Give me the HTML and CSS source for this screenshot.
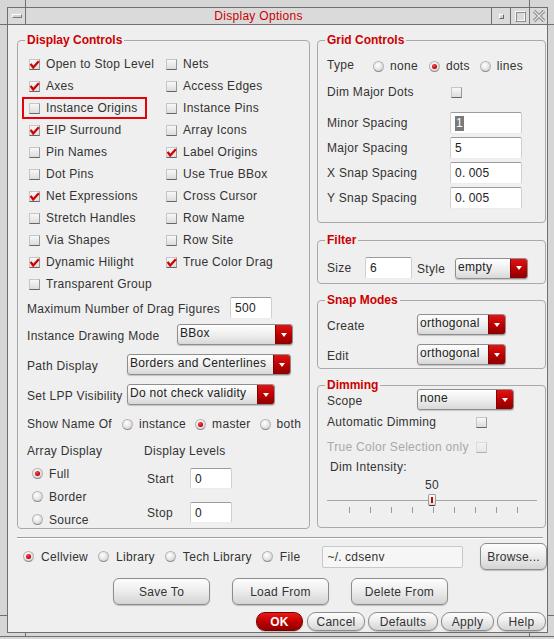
FILE: index.html
```html
<!DOCTYPE html>
<html lang="en">
<head>
<meta charset="utf-8">
<title>Display Options</title>
<link rel="stylesheet" href="styles.css">
</head>
<body>
<div class="window">
  <div class="frame-strip">
    <div class="fs-left"></div>
    <div class="fs-mid"></div>
    <div class="fs-right"></div>
  </div>
  <div class="title-row">
    <div class="edge edge-l"></div>
    <div class="titlebar">
      <div class="tb-cell tb-menu"><span class="menu-bar"></span></div>
      <div class="tb-title">Display Options</div>
      <div class="tb-cell tb-w19"><span class="min-box"></span></div>
      <div class="tb-cell tb-w19"><span class="max-box"></span></div>
      <div class="tb-cell tb-w18">
        <svg class="close-x" width="14" height="14" viewBox="0 0 14 14">
          <path d="M2 2 L12 12 M12 2 L2 12" stroke="#8a8a8a" stroke-width="3.2" fill="none"/>
          <path d="M2 2 L12 12 M12 2 L2 12" stroke="#e4e4e4" stroke-width="1.2" fill="none"/>
        </svg>
      </div>
    </div>
    <div class="edge edge-r"></div>
  </div>

  <div class="mid">
    <div class="side side-l"><div class="side-top"></div></div>
    <main class="content">
      <div class="panels">
        <fieldset class="group dc">
          <legend>Display Controls</legend>
          <div class="cbgrid">
            <label class="cbitem"><span class="cb"><svg class="ck" viewBox="0 0 11 11"><path d="M1.6 4.8 L4.2 8.4 L9.8 2.2"/></svg></span>Open to Stop Level</label>
            <label class="cbitem"><span class="cb"></span>Nets</label>
            <label class="cbitem"><span class="cb"><svg class="ck" viewBox="0 0 11 11"><path d="M1.6 4.8 L4.2 8.4 L9.8 2.2"/></svg></span>Axes</label>
            <label class="cbitem"><span class="cb"></span>Access Edges</label>
            <label class="cbitem hl"><span class="cb"></span>Instance Origins</label>
            <label class="cbitem"><span class="cb"></span>Instance Pins</label>
            <label class="cbitem"><span class="cb"><svg class="ck" viewBox="0 0 11 11"><path d="M1.6 4.8 L4.2 8.4 L9.8 2.2"/></svg></span>EIP Surround</label>
            <label class="cbitem"><span class="cb"></span>Array Icons</label>
            <label class="cbitem"><span class="cb"></span>Pin Names</label>
            <label class="cbitem"><span class="cb"><svg class="ck" viewBox="0 0 11 11"><path d="M1.6 4.8 L4.2 8.4 L9.8 2.2"/></svg></span>Label Origins</label>
            <label class="cbitem"><span class="cb"></span>Dot Pins</label>
            <label class="cbitem"><span class="cb"></span>Use True BBox</label>
            <label class="cbitem"><span class="cb"><svg class="ck" viewBox="0 0 11 11"><path d="M1.6 4.8 L4.2 8.4 L9.8 2.2"/></svg></span>Net Expressions</label>
            <label class="cbitem"><span class="cb"></span>Cross Cursor</label>
            <label class="cbitem"><span class="cb"></span>Stretch Handles</label>
            <label class="cbitem"><span class="cb"></span>Row Name</label>
            <label class="cbitem"><span class="cb"></span>Via Shapes</label>
            <label class="cbitem"><span class="cb"></span>Row Site</label>
            <label class="cbitem"><span class="cb"><svg class="ck" viewBox="0 0 11 11"><path d="M1.6 4.8 L4.2 8.4 L9.8 2.2"/></svg></span>Dynamic Hilight</label>
            <label class="cbitem"><span class="cb"><svg class="ck" viewBox="0 0 11 11"><path d="M1.6 4.8 L4.2 8.4 L9.8 2.2"/></svg></span>True Color Drag</label>
            <label class="cbitem"><span class="cb"></span>Transparent Group</label>
          </div>

          <div class="frow drag-row">
            <span class="lbl">Maximum Number of Drag Figures</span>
            <span class="inp">500</span>
          </div>
          <div class="frow mode-row">
            <span class="lbl">Instance Drawing Mode</span>
            <span class="dd"><span class="dd-text">BBox</span><span class="dd-btn"></span></span>
          </div>
          <div class="frow path-row">
            <span class="lbl">Path Display</span>
            <span class="dd"><span class="dd-text">Borders and Centerlines</span><span class="dd-btn"></span></span>
          </div>
          <div class="frow lpp-row">
            <span class="lbl">Set LPP Visibility</span>
            <span class="dd"><span class="dd-text">Do not check validity</span><span class="dd-btn"></span></span>
          </div>
          <div class="show-row">
            <span class="show-label">Show Name Of</span>
            <span class="opt"><span class="rd"></span>instance</span>
            <span class="opt"><span class="rd on"></span>master</span>
            <span class="opt last"><span class="rd"></span>both</span>
          </div>
          <div class="array">
            <div class="arr-col">
              <div class="cap">Array Display</div>
              <div class="rrow first"><span class="rd on"></span>Full</div>
              <div class="rrow"><span class="rd"></span>Border</div>
              <div class="rrow"><span class="rd"></span>Source</div>
            </div>
            <div class="lvl-col">
              <div class="cap">Display Levels</div>
              <div class="lvl-row start"><span>Start</span><span class="inp">0</span></div>
              <div class="lvl-row stop"><span>Stop</span><span class="inp">0</span></div>
            </div>
          </div>
        </fieldset>

        <div class="rightcol">
          <fieldset class="group grid-g">
            <legend>Grid Controls</legend>
            <div class="type-row">
              <span class="type-label">Type</span>
              <span class="opt o1"><span class="rd"></span>none</span>
              <span class="opt o2"><span class="rd on"></span>dots</span>
              <span class="opt"><span class="rd"></span>lines</span>
            </div>
            <div class="dim-row">
              <span>Dim Major Dots</span>
              <span class="cb"></span>
            </div>
            <div class="spacing">
              <span>Minor Spacing</span><span class="inp wide"><span class="sel">1</span></span>
              <span>Major Spacing</span><span class="inp wide">5</span>
              <span>X Snap Spacing</span><span class="inp wide">0<span class="dot">.</span>005</span>
              <span>Y Snap Spacing</span><span class="inp wide">0<span class="dot">.</span>005</span>
            </div>
          </fieldset>

          <fieldset class="group filter-g">
            <legend>Filter</legend>
            <div class="filter-row">
              <span class="lab-size">Size</span>
              <span class="inp size-inp">6</span>
              <span class="lab-style">Style</span>
              <span class="dd style-dd"><span class="dd-text">empty</span><span class="dd-btn"></span></span>
            </div>
          </fieldset>

          <fieldset class="group snap-g">
            <legend>Snap Modes</legend>
            <div class="frow snap-row first">
              <span class="lbl">Create</span>
              <span class="dd"><span class="dd-text">orthogonal</span><span class="dd-btn"></span></span>
            </div>
            <div class="frow snap-row second">
              <span class="lbl">Edit</span>
              <span class="dd"><span class="dd-text">orthogonal</span><span class="dd-btn"></span></span>
            </div>
          </fieldset>

          <fieldset class="group dim-g">
            <legend>Dimming</legend>
            <div class="frow scope-row">
              <span class="lbl">Scope</span>
              <span class="dd"><span class="dd-text">none</span><span class="dd-btn"></span></span>
            </div>
            <div class="frow chk-row auto-row">
              <span>Automatic Dimming</span>
              <span class="cb"></span>
            </div>
            <div class="frow chk-row tc-row">
              <span>True Color Selection only</span>
              <span class="cb dis"></span>
            </div>
            <div class="di-label">Dim Intensity:</div>
            <div class="slider-val">50</div>
            <div class="slider"><span class="knob"></span></div>
            <div class="ticks">
              <span></span><span></span><span></span><span></span><span></span><span></span><span></span><span></span><span></span>
            </div>
          </fieldset>
        </div>
      </div>

      <div class="sep"></div>

      <div class="file-row">
        <span class="opt"><span class="rd on"></span>Cellview</span>
        <span class="opt"><span class="rd"></span>Library</span>
        <span class="opt"><span class="rd"></span>Tech Library</span>
        <span class="opt"><span class="rd"></span>File</span>
        <span class="path-field">~/<span class="dot">.</span>cdsenv</span>
        <span class="btn browse">Browse...</span>
      </div>

      <div class="btn-row">
        <span class="btn big">Save To</span>
        <span class="btn big">Load From</span>
        <span class="btn big">Delete From</span>
      </div>

      <div class="ok-row">
        <span class="btn pill ok">OK</span>
        <span class="btn pill w-cancel">Cancel</span>
        <span class="btn pill w-defaults">Defaults</span>
        <span class="btn pill w-apply">Apply</span>
        <span class="btn pill w-help">Help</span>
      </div>
    </main>
    <div class="side side-r"><div class="side-top"></div></div>
  </div>

  <div class="frame-strip bottom">
    <div class="fs-left"></div>
    <div class="fs-mid"></div>
    <div class="fs-right"></div>
  </div>
</div>
</body>
</html>
```

FILE: styles.css
```css
* { box-sizing: border-box; }

html, body { margin: 0; padding: 0; }

body {
  width: 554px;
  height: 639px;
  overflow: hidden;
  background: #d6d6d6;
  font-family: "Liberation Sans", Arial, sans-serif;
  font-size: 12px;
  color: #333;
  letter-spacing: 0.3px;
}

.window {
  width: 554px;
  height: 639px;
  display: flex;
  flex-direction: column;
}

/* ---------- window frame ---------- */
.frame-strip { height: 7px; display: flex; }
.frame-strip.bottom { height: 4px; border-bottom: 1px solid #707070; }
.fs-left { width: 26px; border-right: 1px solid #707070; }
.fs-mid { flex: 1; }
.fs-right { width: 25px; border-left: 1px solid #707070; }

.title-row { display: flex; height: 18px; }
.edge { border-bottom: 1px solid #707070; }
.edge-l { width: 7px; }
.edge-r { width: 6px; }

.titlebar {
  width: 541px;
  border: 1px solid #707070;
  background: #dadada;
  display: flex;
}
.tb-cell {
  display: flex;
  align-items: center;
  justify-content: center;
}
.tb-menu { width: 18px; border-right: 1px solid #707070; }
.tb-w19 { width: 19px; border-left: 1px solid #707070; }
.tb-w18 { width: 18px; border-left: 1px solid #707070; }
.menu-bar {
  width: 10px;
  height: 4px;
  border: 1px solid #7c7c7c;
  border-top-color: #fff;
  border-left-color: #fff;
  background: #d0d0d0;
}
.min-box {
  width: 5px;
  height: 5px;
  border: 1px solid #6a6a6a;
  border-top-color: #fff;
  border-left-color: #fff;
  background: #cfcfcf;
}
.max-box {
  width: 11px;
  height: 11px;
  border: 1px solid #8a8a8a;
  border-top-color: #fafafa;
  border-left-color: #fafafa;
  box-shadow: inset 1px 1px 0 #8a8a8a, inset -1px -1px 0 #fafafa;
}
.tb-title {
  flex: 1;
  text-align: center;
  color: #cc0000;
  line-height: 16px;
}

.mid { display: flex; height: 608px; }
.side-l { width: 7px; }
.side-r { width: 6px; }
.side-top { height: 591px; border-bottom: 1px solid #707070; }

.content {
  width: 541px;
  background: #efefef;
  border-left: 1px solid #707070;
  border-right: 1px solid #707070;
  border-bottom: 1px solid #707070;
  padding: 8px 0 0 9px;
  display: flex;
  flex-direction: column;
}

/* ---------- group boxes ---------- */
.panels { display: flex; gap: 7px; height: 496px; }

fieldset.group {
  margin: 0;
  padding: 0 9px;
  border: 1px solid #a9a9a9;
  border-radius: 4px;
  min-width: 0;
}
fieldset.group legend {
  padding: 0 2px;
  margin-left: -2px;
  font-weight: bold;
  color: #cc0000;
  line-height: 14px;
  letter-spacing: 0;
}

fieldset.dc { width: 293px; height: 496px; padding-top: 6px; }
.rightcol { width: 229px; display: flex; flex-direction: column; }
fieldset.grid-g { height: 190px; }
fieldset.filter-g { height: 51px; margin-top: 10px; }
fieldset.snap-g { height: 76px; margin-top: 9px; }
fieldset.dim-g { height: 150px; margin-top: 9px; }

/* ---------- controls ---------- */
.cb {
  flex: none;
  width: 11px;
  height: 11px;
  display: inline-flex;
  background: linear-gradient(#f8f8f8, #dcdcdc);
  border: 1px solid #c6c6c6;
  border-right-color: #999;
  border-bottom-color: #666;
}
.cb.dis { opacity: 0.45; }
.ck {
  width: 11px;
  height: 11px;
  margin: -1px;
  overflow: visible;
}
.ck path {
  fill: none;
  stroke: #d20000;
  stroke-width: 2.3;
}

.rd {
  flex: none;
  width: 11px;
  height: 11px;
  border-radius: 50%;
  display: inline-flex;
  align-items: center;
  justify-content: center;
  background: radial-gradient(circle at 40% 35%, #ffffff, #e4e4e4 55%, #b9b9b9);
  border: 1px solid #b4b4b4;
  border-bottom-color: #8e8e8e;
}
.rd.on::after {
  content: "";
  width: 5px;
  height: 5px;
  border-radius: 50%;
  background: radial-gradient(circle at 40% 35%, #ff5050, #cc0000 60%, #8a0000);
}

.opt {
  flex: none;
  display: inline-flex;
  align-items: center;
  gap: 6px;
  white-space: nowrap;
}

.inp {
  display: flex;
  align-items: center;
  height: 22px;
  padding-left: 4px;
  background: #fff;
  border: 1px solid #cfcfcf;
  border-top-color: #9c9c9c;
  border-bottom-color: #ececec;
  border-radius: 2px;
  color: #222;
  white-space: nowrap;
}
.sel {
  display: inline-block;
  background: #7a7a7a;
  color: #fff;
  line-height: 15px;
  padding: 0 1px;
}
.dot { margin-right: 3px; }

.dd {
  display: flex;
  height: 21px;
  border: 1px solid #8e8e8e;
  border-radius: 3px;
  background: linear-gradient(#fefefe, #efefef 50%, #d8d8d8);
  box-shadow: 0 1px 1px rgba(0, 0, 0, 0.18);
  overflow: hidden;
}
.dd-text {
  flex: 1;
  padding-left: 2px;
  line-height: 17px;
  color: #222;
  white-space: nowrap;
  overflow: hidden;
}
.dd-btn {
  width: 17px;
  flex: none;
  display: flex;
  align-items: center;
  justify-content: center;
  background: linear-gradient(#e01414, #b80000 55%, #8e0000);
  border-left: 1px solid #8a0000;
}
.dd-btn::after {
  content: "";
  border-left: 3px solid transparent;
  border-right: 3px solid transparent;
  border-top: 4px solid #fff;
}

.btn {
  display: flex;
  align-items: center;
  justify-content: center;
  border: 1px solid #8c8c8c;
  border-radius: 6px;
  background: linear-gradient(#fdfdfd, #eeeeee 45%, #d4d4d4);
  box-shadow: 0 1px 1px rgba(0, 0, 0, 0.2);
  color: #333;
  white-space: nowrap;
}

/* ---------- display controls ---------- */
.cbgrid {
  display: grid;
  grid-template-columns: 137px 1fr;
  grid-auto-rows: 22px;
  margin-left: 2px;
}
.cbitem {
  display: flex;
  align-items: center;
  gap: 6px;
  white-space: nowrap;
}
.cbitem.hl {
  width: 125px;
  margin-left: -7px;
  padding-left: 5px;
  border: 2px solid #e8000b;
}

.frow { display: grid; align-items: center; white-space: nowrap; }
.frow .lbl { padding-top: 3px; }
.drag-row .lbl { padding-top: 1px; }
.drag-row { grid-template-columns: 203px 42px; height: 22px; margin-top: 2px; }
.mode-row { grid-template-columns: 150px 116px; height: 21px; margin-top: 5px; }
.path-row { grid-template-columns: 100px 164px; height: 21px; margin-top: 9px; }
.lpp-row { grid-template-columns: 100px 148px; height: 21px; margin-top: 9px; }

.show-row {
  display: flex;
  align-items: center;
  height: 22px;
  margin-top: 8px;
  white-space: nowrap;
}
.show-label { flex: none; width: 95px; }
.show-row .opt { margin-right: 9px; }
.show-row .opt.last { margin-right: 0; }

.array {
  display: grid;
  grid-template-columns: 117px 1fr;
  margin-top: 9px;
}
.cap { line-height: 14px; }
.rrow {
  display: flex;
  align-items: center;
  gap: 6px;
  height: 23px;
  padding-left: 5px;
}
.rrow.first { margin-top: 4px; }
.lvl-row {
  display: grid;
  grid-template-columns: 43px 42px;
  align-items: center;
  height: 21px;
  margin-left: 3px;
}
.lvl-row .inp { height: 21px; }
.lvl-row.start { margin-top: 10px; }
.lvl-row.stop { margin-top: 13px; }

/* ---------- grid controls ---------- */
.type-row {
  display: flex;
  align-items: center;
  height: 22px;
  margin-top: 8px;
}
.type-label { width: 46px; padding-bottom: 3px; }
.type-row .o1 { margin-right: 11px; }
.type-row .o2 { margin-right: 10px; }

.dim-row {
  display: grid;
  grid-template-columns: 124px 11px;
  align-items: center;
  height: 22px;
  margin-top: 4px;
}
.spacing {
  display: grid;
  grid-template-columns: 123px 72px;
  grid-auto-rows: 22px;
  row-gap: 3px;
  align-items: center;
  margin-top: 9px;
}
.inp.wide { height: 22px; }

/* ---------- filter ---------- */
.filter-row {
  display: flex;
  align-items: center;
  height: 22px;
  margin-top: 10px;
}
.lab-size { width: 38px; }
.size-inp { width: 47px; }
.lab-style { width: 38px; margin-left: 5px; padding-top: 2px; }
.style-dd { width: 73px; }

/* ---------- snap ---------- */
.snap-row { grid-template-columns: 90px 89px; height: 21px; }
.snap-row.first { margin-top: 7px; }
.snap-row.second { margin-top: 9px; }

/* ---------- dimming ---------- */
.scope-row { grid-template-columns: 90px 97px; height: 21px; margin-top: -3px; }
.chk-row { grid-template-columns: 149px 11px; height: 22px; }
.auto-row { margin-top: 1px; }
.tc-row { margin-top: 3px; color: #a9a9a9; }
.di-label { padding-left: 3px; line-height: 14px; margin-top: 2px; }
.slider-val { width: 210px; text-align: center; line-height: 14px; margin-top: 4px; }
.slider {
  width: 210px;
  height: 14px;
  margin-top: 1px;
  display: flex;
  align-items: center;
  justify-content: center;
  background: linear-gradient(#a4a4a4, #a4a4a4) no-repeat 0 7px / 100% 1px;
}
.knob {
  width: 8px;
  height: 12px;
  display: flex;
  align-items: center;
  justify-content: center;
  border: 1px solid #9a9a9a;
  border-bottom-color: #333;
  border-radius: 2px;
  background: linear-gradient(#ffffff, #dcdcdc);
}
.knob::after {
  content: "";
  width: 2px;
  height: 6px;
  background: #cc0000;
}
.ticks {
  width: 210px;
  height: 6px;
  padding: 0 19px 0 22px;
  display: flex;
  justify-content: space-between;
}
.ticks span { width: 1px; background: #9a9a9a; }

/* ---------- bottom ---------- */
.sep {
  height: 2px;
  margin-top: 8px;
  margin-right: 4px;
  border-top: 1px solid #9c9c9c;
  border-bottom: 1px solid #ffffff;
}
.file-row {
  display: flex;
  align-items: center;
  height: 27px;
  margin-top: 4px;
  margin-left: 6px;
}
.file-row .opt { gap: 7px; margin-right: 10px; }
.path-field {
  display: flex;
  align-items: center;
  width: 141px;
  height: 22px;
  margin-left: 12px;
  padding-left: 4px;
  background: #f6f6f6;
  border: 1px solid #c8c8c8;
  border-radius: 2px;
  color: #333;
}
.browse { width: 67px; height: 27px; margin-left: 17px; }

.btn-row {
  display: flex;
  gap: 22px;
  height: 27px;
  margin-top: 8px;
  padding-left: 96px;
}
.btn.big { width: 97px; }

.ok-row {
  display: flex;
  justify-content: flex-end;
  gap: 3px;
  height: 19px;
  margin-top: 7px;
  margin-right: 1px;
}
.btn.pill { border-radius: 9px; }
.btn.ok {
  width: 47px;
  margin-right: 1px;
  color: #fff;
  font-weight: bold;
  border-color: #7a0000;
  background: linear-gradient(#ea1a1a, #c00000 50%, #900000);
}
.w-cancel { width: 58px; }
.w-defaults { width: 70px; }
.w-apply { width: 53px; }
.w-help { width: 49px; }
```
